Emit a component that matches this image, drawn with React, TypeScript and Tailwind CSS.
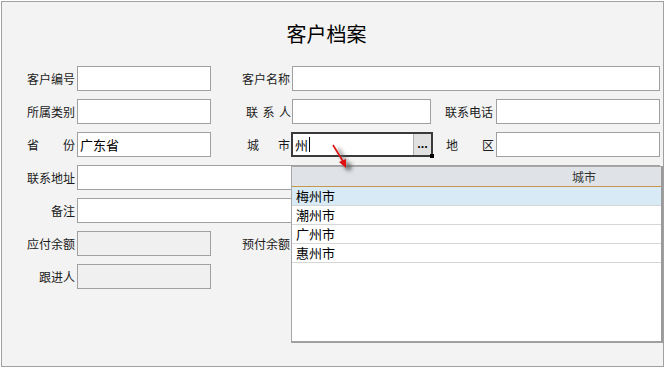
import { FC, ReactNode } from "react";

const font = { fontFamily: '"Noto Sans CJK SC", "Noto Sans", sans-serif' };

interface FieldProps {
    width: string;
    disabled?: boolean;
    children?: ReactNode;
}

const Field: FC<FieldProps> = ({ width, disabled, children }) => (
    <div
        className={`${width} h-[25px] shrink-0 border border-[#a0a0a0] flex items-center pl-[2px] text-[13px] text-black ${disabled ? "bg-[#f0f0f0]" : "bg-white"}`}
    >
        {children}
    </div>
);

const Label: FC<{ className: string; children: ReactNode }> = ({ className, children }) => (
    <div className={`shrink-0 flex text-[12px] text-[#1a1a1a] leading-none ${className}`}>{children}</div>
);

const cities = ["梅州市", "潮州市", "广州市", "惠州市"];

export default function App() {
    return (
        <div className="w-[664px] h-[367px] bg-white pl-px pt-px overflow-hidden" style={font}>
            <div className="relative w-[663px] h-[366px] border border-[#a0a0a0] bg-[#f3f3f3]">
                {/* Title */}
                <div className="h-[64px] flex items-center justify-center pr-[12px] text-[20px] text-black">
                    客户档案
                </div>

                {/* Form rows */}
                <div className="flex flex-col gap-[8px]">
                    <div className="flex items-center">
                        <Label className="w-[75px] justify-end pr-[2px]">客户编号</Label>
                        <Field width="w-[134px]" />
                        <Label className="w-[81px] justify-end pr-[2px]">客户名称</Label>
                        <Field width="w-[368px]" />
                    </div>
                    <div className="flex items-center">
                        <Label className="w-[75px] justify-end pr-[2px]">所属类别</Label>
                        <Field width="w-[134px]" />
                        <Label className="w-[81px] justify-between pl-[35px] pr-[1px]">
                            <span>联</span><span>系</span><span>人</span>
                        </Label>
                        <Field width="w-[139px]" />
                        <Label className="w-[65px] justify-end pr-[3px]">联系电话</Label>
                        <Field width="w-[164px]" />
                    </div>
                    <div className="flex items-center">
                        <Label className="w-[75px] justify-between pl-[25px] pr-[2px]">
                            <span>省</span><span>份</span>
                        </Label>
                        <Field width="w-[134px]">广东省</Field>
                        <Label className="w-[80px] justify-between pl-[36px] pr-[1px]">
                            <span>城</span><span>市</span>
                        </Label>
                        {/* city combo */}
                        <div className="relative w-[142px] h-[25px] shrink-0 border-2 border-[#3a3a3a] bg-white flex items-center">
                            <span className="pl-[2px] text-[13px] text-black">州</span>
                            <span className="w-px h-[15px] bg-black ml-px" />
                            <div className="ml-auto w-[18px] h-[21px] bg-[#e1e1e1] border-l border-[#adadad] flex items-center justify-center text-[11px] font-bold leading-none pb-[3px]">
                                ...
                            </div>
                            <div className="absolute -right-[3px] -bottom-[3px] w-[4px] h-[4px] bg-black" />
                        </div>
                        <Label className="w-[63px] justify-between pl-[13px] pr-[2px]">
                            <span>地</span><span>区</span>
                        </Label>
                        <Field width="w-[164px]" />
                    </div>
                    <div className="flex items-center">
                        <Label className="w-[75px] justify-end pr-[2px]">联系地址</Label>
                        <Field width="w-[583px]" />
                    </div>
                    <div className="flex items-center">
                        <Label className="w-[75px] justify-end pr-[2px]">备注</Label>
                        <Field width="w-[583px]" />
                    </div>
                    <div className="flex items-center">
                        <Label className="w-[75px] justify-end pr-[2px]">应付余额</Label>
                        <Field width="w-[134px]" disabled />
                        <Label className="w-[81px] justify-end pr-[2px]">预付余额</Label>
                        <Field width="w-[134px]" disabled />
                    </div>
                    <div className="flex items-center">
                        <Label className="w-[75px] justify-end pr-[2px]">跟进人</Label>
                        <Field width="w-[134px]" disabled />
                    </div>
                </div>

                {/* Dropdown grid */}
                <div className="absolute left-[289px] top-[164px] w-[372px] h-[177px] bg-white border-l border-t border-[#a8a8a8] border-r-2 border-b-2 border-r-[#9a9a9a] border-b-[#a0a0a0] flex flex-col">
                    <div className="h-[20px] shrink-0 bg-[#dfe3e8] border-b border-[#c8954c] flex items-center pl-[280px] text-[12px] text-[#333]">
                        城市
                    </div>
                    {cities.map((c, i) => (
                        <div
                            key={c}
                            className={`h-[19px] shrink-0 border-b border-[#d6d6d6] flex items-center pl-[4px] text-[13px] text-black ${i === 0 ? "bg-[#d9eaf7]" : "bg-white"}`}
                        >
                            {c}
                        </div>
                    ))}
                </div>

                {/* Red arrow */}
                <svg className="absolute left-[325px] top-[139px]" width="40" height="40" viewBox="0 0 40 40">
                    <defs>
                        <filter id="sh" x="-50%" y="-50%" width="200%" height="200%">
                            <feGaussianBlur stdDeviation="2" />
                        </filter>
                    </defs>
                    <path d="M8 6 L20 27 M20 27 L14 23 M20 27 L20 20" stroke="#666" strokeWidth="2.5" fill="none" filter="url(#sh)" transform="translate(3 2)" />
                    <line x1="6" y1="4" x2="17" y2="22" stroke="#e01010" strokeWidth="1.6" />
                    <polygon points="19,27 12,21 19,18" fill="#e01010" />
                </svg>
            </div>
        </div>
    );
}
